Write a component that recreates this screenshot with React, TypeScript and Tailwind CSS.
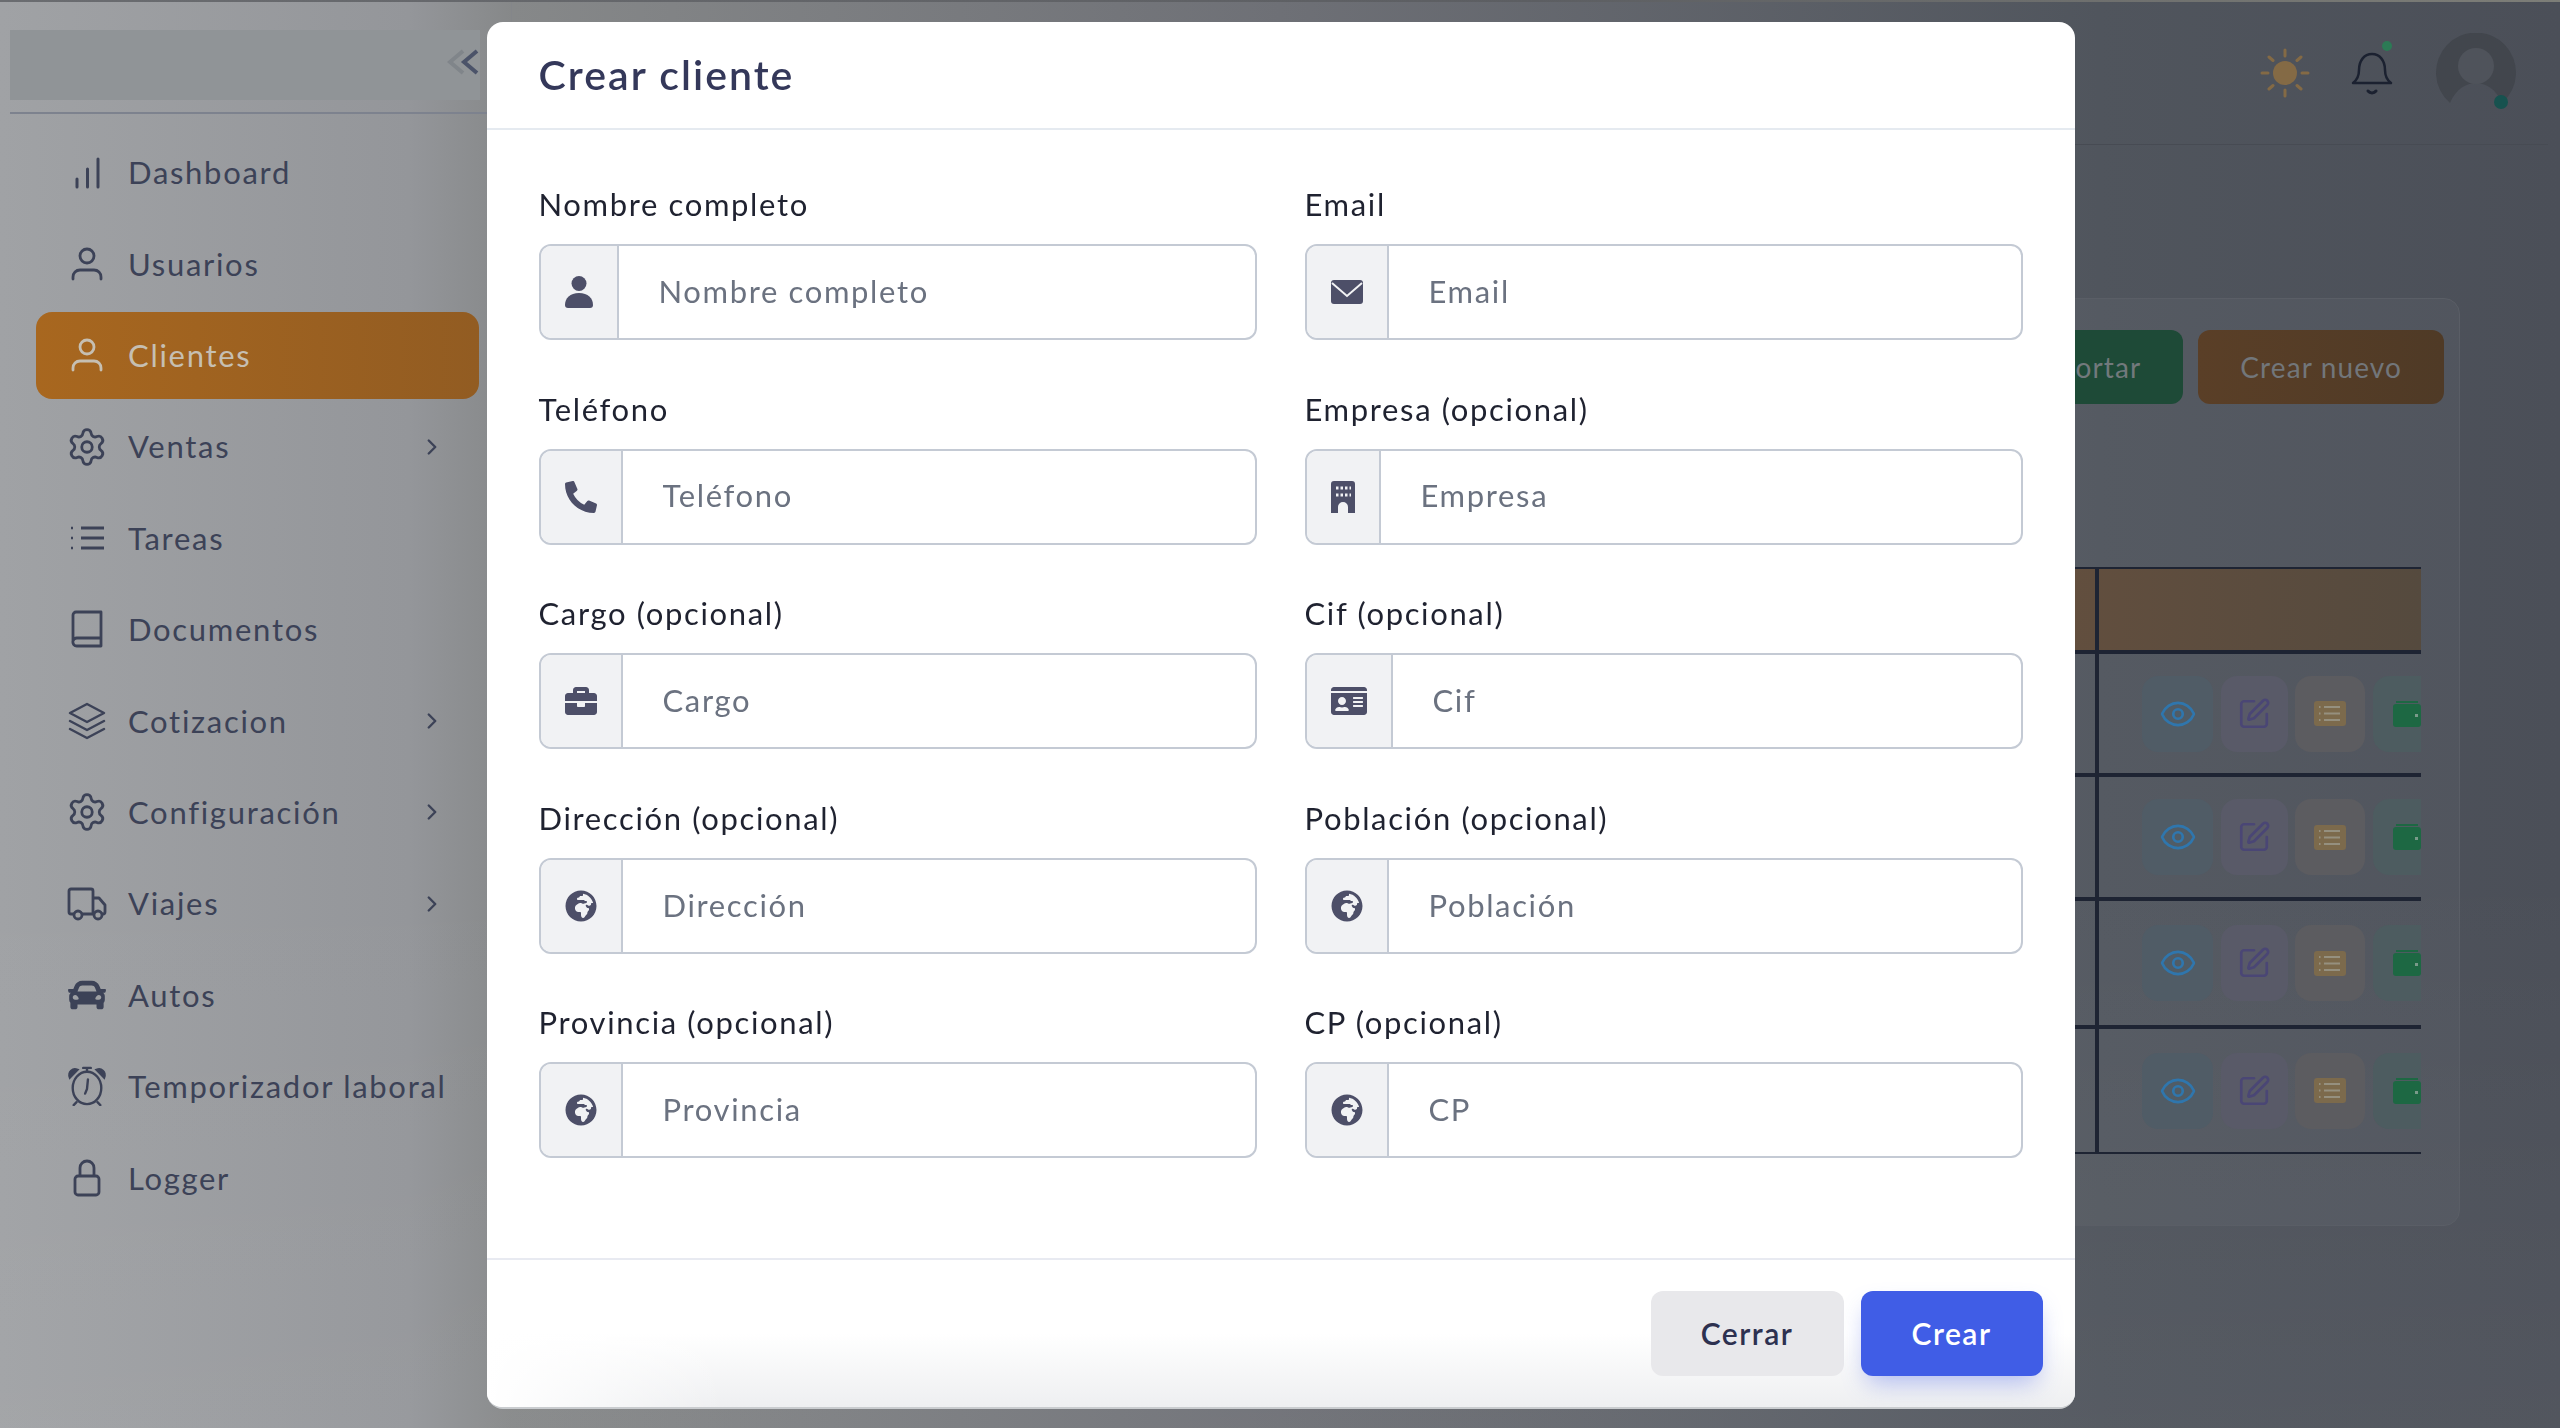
import React from "react";
import { ChevronRight, Eye, Settings, SquarePen } from "lucide-react";
import { FaBriefcase, FaCar, FaGlobeAfrica, FaIdCard, FaPhoneAlt } from "react-icons/fa";

const BarsIcon = () => (
  <svg width="30" height="32" viewBox="0 0 30 32" fill="none" stroke="currentColor" strokeWidth="3" strokeLinecap="round">
    <path d="M5 22v8M15.5 12v18M26 2v28" />
  </svg>
);

const UserIcon = () => (
  <svg width="32" height="34" viewBox="0 0 32 34" fill="none" stroke="currentColor" strokeWidth="2.8" strokeLinecap="round">
    <circle cx="16" cy="9" r="7" />
    <path d="M2 32v-2c0-4 3-7 7-7h14c4 0 7 3 7 7v2" />
  </svg>
);

const ListIcon = () => (
  <svg width="36" height="26" viewBox="0 0 36 26" fill="none" stroke="currentColor" strokeWidth="3">
    <path d="M12 3h23M12 13h23M12 23h23" />
    <path d="M2 3h2M2 13h2M2 23h2" strokeWidth="2.5" />
  </svg>
);

const BookIcon = () => (
  <svg width="32" height="38" viewBox="0 0 32 38" fill="none" stroke="currentColor" strokeWidth="2.8" strokeLinejoin="round">
    <path d="M2 31V5a3 3 0 0 1 3-3h25v34H6a4 4 0 0 1-4-5 4 4 0 0 1 4-3h24" />
  </svg>
);

const LayersIcon = () => (
  <svg width="38" height="38" viewBox="0 0 38 38" fill="none" stroke="currentColor" strokeWidth="2.5" strokeLinejoin="round" strokeLinecap="round">
    <path d="M19 2 36 11 19 20 2 11Z" />
    <path d="M2 19l17 9 17-9" />
    <path d="M2 27l17 9 17-9" />
  </svg>
);

const TruckIcon = () => (
  <svg width="40" height="34" viewBox="0 0 40 34" fill="none" stroke="currentColor" strokeWidth="2.8" strokeLinejoin="round">
    <path d="M8 27H4a2 2 0 0 1-2-2V4a2 2 0 0 1 2-2h20a2 2 0 0 1 2 2v23H14" />
    <path d="M26 11h6l6 7v7a2 2 0 0 1-2 2h-2M28 27h-2" />
    <circle cx="11" cy="28" r="4" />
    <circle cx="31" cy="28" r="4" />
  </svg>
);

const AlarmIcon = () => (
  <svg width="40" height="40" viewBox="0 0 40 42" fill="none" stroke="currentColor" strokeWidth="2.5" strokeLinecap="round">
    <ellipse cx="20" cy="23" rx="15" ry="17" />
    <path d="M21 14l-1 10-2 5" />
    <path d="M9 38l-3 3M31 38l3 3M16 2h8M20 2v4" />
    <path d="M2 12c-2-6 3-10 8-8Z" fill="currentColor" />
    <path d="M38 12c2-6-3-10-8-8Z" fill="currentColor" />
  </svg>
);

const LockIcon = () => (
  <svg width="28" height="38" viewBox="0 0 28 38" fill="none" stroke="currentColor" strokeWidth="2.8">
    <rect x="2" y="17" width="24" height="19" rx="3" />
    <path d="M7 17V9a7 7 0 0 1 14 0v8" />
  </svg>
);

const PersonIcon = () => (
  <svg width="28" height="32" viewBox="0 0 28 32" fill="currentColor">
    <circle cx="14" cy="7.5" r="7.5" />
    <path d="M0 29c0-7 5-12 14-12s14 5 14 12c0 2-1 3-3 3H3c-2 0-3-1-3-3Z" />
  </svg>
);

const EnvelopeIcon = () => (
  <svg width="32" height="24" viewBox="0 0 32 24">
    <rect width="32" height="24" rx="3" fill="currentColor" />
    <path d="M1 3l15 13L31 3" fill="none" stroke="#f1f2f4" strokeWidth="2" />
  </svg>
);

const BuildingIcon = () => (
  <svg width="24" height="32" viewBox="0 0 24 32">
    <path d="M3 0h18a3 3 0 0 1 3 3v29h-7v-6a5 5 0 0 0-10 0v6H0V3a3 3 0 0 1 3-3Z" fill="currentColor" />
    <path d="M5 7h2.5M9.5 7H12M14 7h2.5M18.5 7H20M5 14h2.5M9.5 14H12M14 14h2.5M18.5 14H20" stroke="#f1f2f4" strokeWidth="3" />
  </svg>
);

const SunIcon = () => (
  <svg width="50" height="50" viewBox="0 0 50 50" fill="#846a45" stroke="#846a45" strokeWidth="3" strokeLinecap="round">
    <circle cx="25" cy="25" r="12" stroke="none" />
    <path d="M25 2v6M25 42v6M2 25h6M42 25h6M9 9l4 3.5M41 9l-4 3.5M9 41l4-3.5M41 41l-4-3.5" />
  </svg>
);

const BellIcon = () => (
  <svg width="42" height="46" viewBox="0 0 42 46" fill="none" stroke="#1b2130" strokeWidth="2.5" strokeLinecap="round" strokeLinejoin="round">
    <path d="M2 33c4-3 6-7 6-13 0-9 5-16 13-16s13 7 13 16c0 6 2 10 6 13Z" />
    <path d="M17 41c2 2.5 6 2.5 8 0" strokeWidth="3" />
  </svg>
);

const AvatarIcon = () => (
  <svg width="80" height="80" viewBox="0 0 80 80">
    <path d="M14 70A40 40 0 1 1 66 70C60 56 50 50 40 50S20 56 14 70Z" fill="#42464d" />
    <circle cx="40" cy="33" r="18" fill="#4f535b" />
  </svg>
);

const ListBoxIcon = () => (
  <svg width="32" height="25" viewBox="0 0 32 25">
    <rect width="32" height="25" rx="3" fill="#7c6a4c" />
    <path d="M10 6h16M10 12.5h16M10 19h16M5 6h1.5M5 12.5h1.5M5 19h1.5" stroke="#95907f" strokeWidth="2" />
  </svg>
);

const WalletIcon = () => (
  <svg width="28" height="26" viewBox="0 0 28 26">
    <rect y="3" width="28" height="23" rx="3" fill="#1d6843" />
    <path d="M3 1h22" stroke="#1d6843" strokeWidth="2" />
    <rect x="22" y="13" width="3" height="3" fill="#7a9a8a" />
  </svg>
);

const navItems = [
  { label: "Dashboard", icon: <BarsIcon /> },
  { label: "Usuarios", icon: <UserIcon /> },
  { label: "Clientes", icon: <UserIcon />, active: true },
  { label: "Ventas", icon: <Settings size={42} strokeWidth={1.6} />, more: true },
  { label: "Tareas", icon: <ListIcon /> },
  { label: "Documentos", icon: <BookIcon /> },
  { label: "Cotizacion", icon: <LayersIcon />, more: true },
  { label: "Configuración", icon: <Settings size={42} strokeWidth={1.6} />, more: true },
  { label: "Viajes", icon: <TruckIcon />, more: true },
  { label: "Autos", icon: <FaCar size={38} /> },
  { label: "Temporizador laboral", icon: <AlarmIcon /> },
  { label: "Logger", icon: <LockIcon /> },
];

const fields = [
  { label: "Nombre completo", placeholder: "Nombre completo", icon: <PersonIcon /> },
  { label: "Email", placeholder: "Email", icon: <EnvelopeIcon /> },
  { label: "Teléfono", placeholder: "Teléfono", icon: <FaPhoneAlt size={32} /> },
  { label: "Empresa (opcional)", placeholder: "Empresa", icon: <BuildingIcon /> },
  { label: "Cargo (opcional)", placeholder: "Cargo", icon: <FaBriefcase size={32} /> },
  { label: "Cif (opcional)", placeholder: "Cif", icon: <FaIdCard size={36} /> },
  { label: "Dirección (opcional)", placeholder: "Dirección", icon: <FaGlobeAfrica size={32} /> },
  { label: "Población (opcional)", placeholder: "Población", icon: <FaGlobeAfrica size={32} /> },
  { label: "Provincia (opcional)", placeholder: "Provincia", icon: <FaGlobeAfrica size={32} /> },
  { label: "CP (opcional)", placeholder: "CP", icon: <FaGlobeAfrica size={32} /> },
];

const rowClasses = ["h-[123px] border-b-4", "h-[124px] border-b-4", "h-[128px] border-b-4", "h-[125px] border-b-2"];

const Sidebar = () => (
  <aside className="w-[512px] shrink-0 border-r border-[#84868a] text-[#3c4257]">
    <div className="relative ml-[10px] h-[112px] border-b-2 border-[#7d828e] pt-[28px]">
      <div className="h-[70px] w-[470px] bg-[#909497]" />
      <svg className="absolute left-[437px] top-[47px]" width="42" height="28" viewBox="0 0 42 28" fill="none" strokeWidth="4">
        <path d="M16 2 3 13l13 11" stroke="#80858a" />
        <path d="M30 2 17 13l13 11" stroke="#4b5369" />
      </svg>
    </div>
    <nav className="mt-[15px] flex flex-col gap-[4.4px] pl-[36px]">
      {navItems.map((item) => (
        <div
          key={item.label}
          className={
            "flex h-[87px] w-[443px] items-center rounded-2xl pl-[27px] pr-[34px] " +
            (item.active ? "bg-[linear-gradient(90deg,#a8671f,#925c22)] text-[#c6bfb2]" : "")
          }
        >
          <span className="flex w-[48px] shrink-0 justify-center">{item.icon}</span>
          <span className="ml-[17px] flex-1 whitespace-nowrap text-[31px] tracking-[0.055em]">{item.label}</span>
          {item.more && <ChevronRight size={26} strokeWidth={2.2} />}
        </div>
      ))}
    </nav>
  </aside>
);

const TableRow = ({ rowClass }: { rowClass: string }) => (
  <div className={"flex items-center border-[#1e2433] " + rowClass}>
    <div className="h-full w-[306px] shrink-0 border-r-4 border-[#1e2433]" />
    <div className="flex gap-[7.5px] pl-[43px]">
      <div className="flex h-[76px] w-[71px] items-center justify-center rounded-2xl bg-[#505c66] text-[#2f76ad]">
        <Eye size={38} strokeWidth={1.7} />
      </div>
      <div className="flex h-[76px] w-[67px] items-center justify-center rounded-2xl bg-[#595a68] text-[#4a4675]">
        <SquarePen size={34} strokeWidth={1.9} />
      </div>
      <div className="flex h-[76px] w-[70px] items-center justify-center rounded-2xl bg-[#5c5c60]">
        <ListBoxIcon />
      </div>
      <div className="flex h-[76px] w-[71px] shrink-0 items-center rounded-2xl bg-[#4d5c60] pl-[20px]">
        <WalletIcon />
      </div>
    </div>
  </div>
);

const Main = () => (
  <main className="min-w-0 flex-1">
    <header className="flex h-[143px] w-[2036px] items-center justify-end border-b border-[#474b53] pr-[32px]">
      <SunIcon />
      <div className="relative ml-[41px]">
        <BellIcon />
        <span className="absolute -top-[9px] left-[31px] h-[10px] w-[10px] rounded-full bg-[#2c7a55]" />
      </div>
      <div className="relative ml-[43px] h-[80px] w-[80px]">
        <AvatarIcon />
        <span className="absolute left-[58px] top-[62px] h-[14px] w-[14px] rounded-full bg-[#17524f]" />
      </div>
    </header>
    <section className="ml-[80px] mr-[100px] mt-[153px] h-[928px] rounded-2xl border border-[#5a5e66] bg-white/[0.03] pl-[1200px]">
      <div className="flex justify-end gap-[15px] pr-[15px] pt-[31px]">
        <div className="flex h-[74px] items-center rounded-xl bg-[#1e4a37] px-[42px] text-[28px] tracking-[0.04em] text-[#72797c]">
          Exportar
        </div>
        <div className="flex h-[74px] items-center rounded-xl bg-[linear-gradient(90deg,#5a3f27,#4f3a26)] px-[42px] text-[28px] tracking-[0.04em] text-[#72767a]">
          Crear nuevo
        </div>
      </div>
      <div className="mt-[163px] w-[628px] overflow-hidden">
        <div className="flex h-[87px] border-y-2 border-b-4 border-[#1e2433] bg-[linear-gradient(90deg,#6c523e,#554a3e)]">
          <div className="w-[306px] shrink-0 border-r-4 border-[#1e2433]" />
        </div>
        {rowClasses.map((rowClass, i) => (
          <TableRow key={i} rowClass={rowClass} />
        ))}
      </div>
    </section>
  </main>
);

const Modal = () => (
  <div className="fixed inset-0 flex justify-center pl-[1px] pt-[22px]">
    <div className="flex h-[1387px] w-[1588px] flex-col overflow-hidden rounded-2xl border-b-2 border-[#c9cccf] bg-white">
      <div className="flex h-[108px] shrink-0 items-center border-b-2 border-[#e5eaf0] pl-[52px]">
        <h2 className="text-[41px] font-semibold tracking-[0.05em] text-[#34385a]">Crear cliente</h2>
      </div>
      <form className="grid flex-1 grid-cols-[718px_718px] content-start gap-x-[48px] gap-y-[49.6px] pl-[52px] pt-[55px]">
        {fields.map((field) => (
          <label key={field.label} className="block">
            <span className="mb-[21px] block text-[31px] leading-[38px] tracking-[0.053em] text-[#1f2230]">{field.label}</span>
            <span className="flex h-[96px] overflow-hidden rounded-xl border-2 border-[#c4cad4]">
              <span className="flex shrink-0 items-center border-r-2 border-[#c4cad4] bg-[#f1f2f4] px-[24px] text-[#4d4f68]">
                {field.icon}
              </span>
              <input
                placeholder={field.placeholder}
                className="min-w-0 flex-1 px-[40px] pb-[2px] text-[31px] tracking-[0.053em] outline-none placeholder:text-[#6b7280]"
              />
            </span>
          </label>
        ))}
      </form>
      <div className="flex h-[149px] shrink-0 justify-end gap-[17px] border-t-2 border-[#e8eaf1] bg-[linear-gradient(90deg,#fff_0%,transparent_15%),linear-gradient(180deg,#fff_50%,#eeeff1_100%)] pr-[32px] pt-[31px]">
        <button className="h-[85px] w-[193px] rounded-xl bg-[#e8e8eb] text-[30px] font-semibold tracking-[0.05em] text-[#2d3150]">
          Cerrar
        </button>
        <button className="h-[85px] w-[182px] rounded-xl bg-[#405de6] text-[30px] font-semibold tracking-[0.05em] text-white shadow-[0_12px_24px_-6px_rgba(64,93,230,0.4)]">
          Crear
        </button>
      </div>
    </div>
  </div>
);

const App: React.FC = () => {
  return (
    <div className="h-screen overflow-hidden bg-[linear-gradient(180deg,transparent_60%,rgba(255,255,255,0.04)_100%),linear-gradient(90deg,#a0a2a5_0%,#94969a_16%,#868889_20%,#6e7076_50%,#50555d_82%,#4b4f58_100%)] font-[Lato,sans-serif]">
      <div className="h-[2px] bg-[linear-gradient(90deg,#6a6c70,#5c5e62_60%,#7d7e78)]" />
      <div className="flex">
        <Sidebar />
        <Main />
      </div>
      <Modal />
    </div>
  );
};

export default App;
